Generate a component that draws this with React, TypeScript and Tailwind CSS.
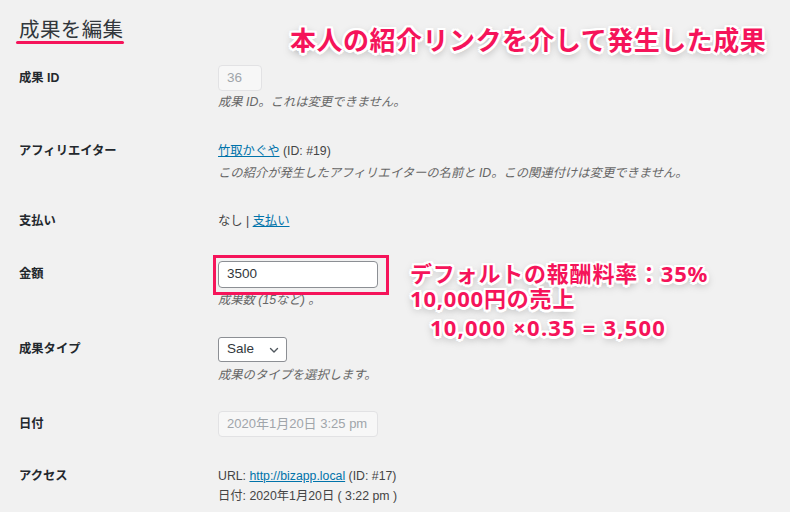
import React from "react";

const PINK = "text-[#f5145a]";

function Label({ h, children }: { h: number; children: React.ReactNode }) {
  return (
    <div
      className={`w-[199px] shrink-0 flex items-center font-bold text-[12.3px] text-[#23282d] ${
        h === 26 ? "h-[26px]" : h === 27 ? "h-[27px]" : h === 25 ? "h-[25px]" : "h-[20px]"
      }`}
    >
      {children}
    </div>
  );
}

function Desc({ children, mt }: { children: React.ReactNode; mt: string }) {
  return <div className={`${mt} italic text-[12.3px] leading-[20px] text-[#666]`}>{children}</div>;
}

const outline =
  "[text-shadow:0_0_2px_#fff,2.5px_0_0_#fff,-2.5px_0_0_#fff,0_2.5px_0_#fff,0_-2.5px_0_#fff,2px_2px_0_#fff,-2px_-2px_0_#fff,2px_-2px_0_#fff,-2px_2px_0_#fff,0_3px_8px_rgba(0,0,0,0.4)]";

export default function App() {
  return (
    <div
      className="relative w-[790px] h-[512px] overflow-hidden bg-[#f1f1f1] pl-[19px] pt-[19px] text-[#444]"
      style={{ fontFamily: '"Liberation Sans", "Noto Sans CJK JP", sans-serif' }}
    >
      <h1 className="text-[20.5px] leading-[22px] tracking-[0.4px] font-normal text-[#32373c]">成果を編集</h1>
      <div className="ml-[-3px] w-[108px] h-[3px] rounded-full bg-[#f5145a]" />

      {/* Row 1 */}
      <div className="mt-[21px] flex">
        <Label h={26}>成果 ID</Label>
        <div>
          <div className="w-[44px] h-[26px] rounded-[4px] border border-[#e2e2e4] bg-[#f7f7f7] px-[8px] flex items-center text-[13.5px] text-[#a0a5aa]">
            36
          </div>
          <Desc mt="mt-[1px]">成果 ID。これは変更できません。</Desc>
        </div>
      </div>

      {/* Row 2 */}
      <div className="mt-[29px] flex">
        <Label h={20}>アフィリエイター</Label>
        <div>
          <div className="text-[12.3px] leading-[20px]">
            <a className="text-[#0073aa] underline">竹取かぐや</a> (ID: #19)
          </div>
          <Desc mt="mt-[2px]">この紹介が発生したアフィリエイターの名前と ID。この関連付けは変更できません。</Desc>
        </div>
      </div>

      {/* Row 3 */}
      <div className="mt-[28px] flex">
        <Label h={20}>支払い</Label>
        <div className="text-[12.3px] leading-[20px]">
          なし | <a className="text-[#0073aa] underline">支払い</a>
        </div>
      </div>

      {/* Row 4 */}
      <div className="mt-[30px] flex">
        <Label h={27}>金額</Label>
        <div>
          <div className="relative">
            <div className="w-[160px] h-[27px] rounded-[4px] border border-[#8c8f94] bg-white px-[8px] flex items-center text-[13.5px] text-[#32373c]">
              3500
            </div>
            <div className="absolute z-10 left-[-5px] top-[-6px] w-[176px] h-[40px] border-[3px] border-[#f5145a] pointer-events-none" />
          </div>
          <Desc mt="mt-[2px]">成果数 (15など) 。</Desc>
        </div>
      </div>

      {/* Row 5 */}
      <div className="mt-[27px] flex">
        <Label h={25}>成果タイプ</Label>
        <div>
          <div className="w-[69px] h-[25px] rounded-[3px] border border-[#8c8f94] bg-white pl-[8px] pr-[6px] flex items-center justify-between text-[13.5px] text-[#32373c]">
            <span>Sale</span>
            <svg width="12" height="12" viewBox="0 0 12 12" fill="none" stroke="#50575e" strokeWidth="1.4" strokeLinecap="round" strokeLinejoin="round">
              <path d="M2.5 4.5 L6 8 L9.5 4.5" />
            </svg>
          </div>
          <Desc mt="mt-[3px]">成果のタイプを選択します。</Desc>
        </div>
      </div>

      {/* Row 6 */}
      <div className="mt-[26px] flex">
        <Label h={26}>日付</Label>
        <div className="w-[160px] h-[26px] rounded-[4px] border border-[#e2e2e4] bg-[#f7f7f7] px-[8px] flex items-center text-[13px] text-[#a0a5aa]">
          2020年1月20日 3:25 pm
        </div>
      </div>

      {/* Row 7 */}
      <div className="mt-[29px] flex">
        <Label h={20}>アクセス</Label>
        <div className="text-[12.3px] leading-[20px]">
          <div>
            URL: <a className="text-[#0073aa] underline">http://bizapp.local</a> (ID: #17)
          </div>
          <div>日付: 2020年1月20日 ( 3:22 pm )</div>
        </div>
      </div>

      {/* Annotations */}
      <div
        className={`absolute left-[290px] top-[24px] text-[26px] leading-[30px] font-bold tracking-[0.5px] ${PINK} ${outline}`}
        style={{ fontFamily: '"Noto Sans CJK JP", sans-serif' }}
      >
        本人の紹介リンクを介して発生した成果
      </div>

      <div
        className={`absolute left-[410px] top-[260px] font-bold text-[22px] ${PINK} ${outline}`}
        style={{ fontFamily: '"Noto Sans", "Noto Sans CJK JP", sans-serif' }}
      >
        <div className="leading-[26px] tracking-[0.8px]">デフォルトの報酬料率：35%</div>
        <div className="leading-[24px] tracking-[0.8px]">10,000円の売上</div>
        <div className="mt-[4px] leading-[26px] pl-[20px] tracking-[1.2px]">10,000 ×0.35 = 3,500</div>
      </div>
    </div>
  );
}
